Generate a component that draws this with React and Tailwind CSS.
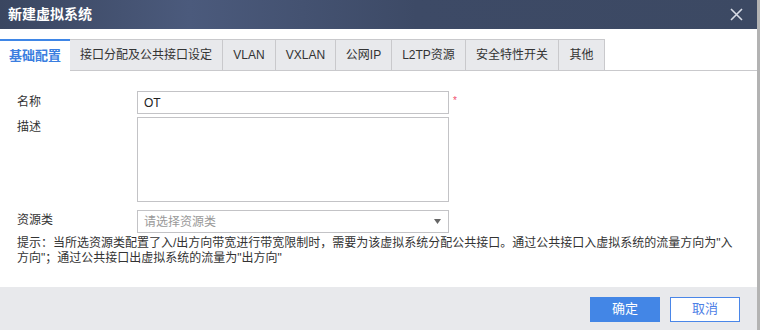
const tabs = [
  { label: '基础配置', w: 'w-[70px]', active: true },
  { label: '接口分配及公共接口设定', w: 'w-[153px]' },
  { label: 'VLAN', w: 'w-[53px]' },
  { label: 'VXLAN', w: 'w-[60px]' },
  { label: '公网IP', w: 'w-[56px]' },
  { label: 'L2TP资源', w: 'w-[74px]' },
  { label: '安全特性开关', w: 'w-[93px]' },
  { label: '其他', w: 'w-[46px]' },
];

export default function App() {
  return (
    <div
      className="flex w-[760px] h-[330px] bg-white text-[#333] text-[12px]"
      style={{ fontFamily: '"Liberation Sans", "Noto Sans CJK SC", sans-serif' }}
    >
      <div className="flex flex-col w-[757px] h-full">
        {/* header */}
        <div className="h-[29px] flex items-center justify-between pl-[8px] pr-[14px] bg-[linear-gradient(90deg,#3a4660_0%,#4b5a7c_25%,#3d4a66_55%,#3c4963_100%)]">
          <span className="text-white text-[14px] font-bold">新建虚拟系统</span>
          <svg width="13" height="13" viewBox="0 0 13 13" className="text-[#d8dce6]">
            <path d="M1 1L12 12M12 1L1 12" stroke="currentColor" strokeWidth="1.6" />
          </svg>
        </div>

        {/* tabs */}
        <div className="mt-[10px] flex h-[32px]">
          {tabs.map((t) =>
            t.active ? (
              <div
                key={t.label}
                className={`${t.w} flex items-center justify-center border-t-2 border-[#3f86e6] text-[#3b7ee0] text-[13px] font-bold`}
              >
                {t.label}
              </div>
            ) : (
              <div
                key={t.label}
                className={`${t.w} flex items-center justify-center border border-l-0 first:border-l bg-[#e8e9ec] border-[#c9c9cc] text-[12px] text-[#333]`}
              >
                {t.label}
              </div>
            )
          )}
          <div className="flex-1 border-b border-[#c9c9cc]" />
        </div>

        {/* form */}
        <div className="pt-[20px] pl-[17px]">
          <div className="flex">
            <div className="w-[120px] pt-[2px] text-[12px]">名称</div>
            <input
              className="w-[312px] h-[23px] border border-[#c3c3c6] px-[6px] text-[12px] text-[#222] outline-none"
              defaultValue="OT"
            />
            <span className="ml-[4px] mt-[5px] text-[10px] leading-none text-[#f0506e]">*</span>
          </div>
          <div className="flex mt-[3px]">
            <div className="w-[120px] pt-[1px]">描述</div>
            <textarea className="w-[312px] h-[85px] border border-[#c3c3c6] resize-none outline-none" />
          </div>
          <div className="flex mt-[8px]">
            <div className="w-[120px] pt-[1px]">资源类</div>
            <div className="w-[312px] h-[23px] border border-[#c3c3c6] flex items-center justify-between pl-[6px] pr-[7px]">
              <span className="text-[#999]">请选择资源类</span>
              <svg width="7" height="5" viewBox="0 0 7 5">
                <path d="M0 0H7L3.5 5Z" fill="#666" />
              </svg>
            </div>
          </div>
          <p className="mt-[3px] w-[724px] leading-[15px] text-[12px] text-[#333]">
            提示：当所选资源类配置了入/出方向带宽进行带宽限制时，需要为该虚拟系统分配公共接口。通过公共接口入虚拟系统的流量方向为"入方向"；通过公共接口出虚拟系统的流量为"出方向"
          </p>
        </div>

        {/* footer */}
        <div className="mt-auto h-[43px] bg-[#e8e9ec] flex items-center justify-end gap-[10px] pr-[17px] pt-[1px]">
          <button className="w-[70px] h-[25px] bg-[#4386e6] text-white text-[13px]">确定</button>
          <button className="w-[70px] h-[25px] bg-white border border-[#4a86e8] text-[#4f7fe6] text-[13px]">取消</button>
        </div>
      </div>
      <div className="w-[3px] h-full bg-[#b3b3b3]" />
    </div>
  );
}
